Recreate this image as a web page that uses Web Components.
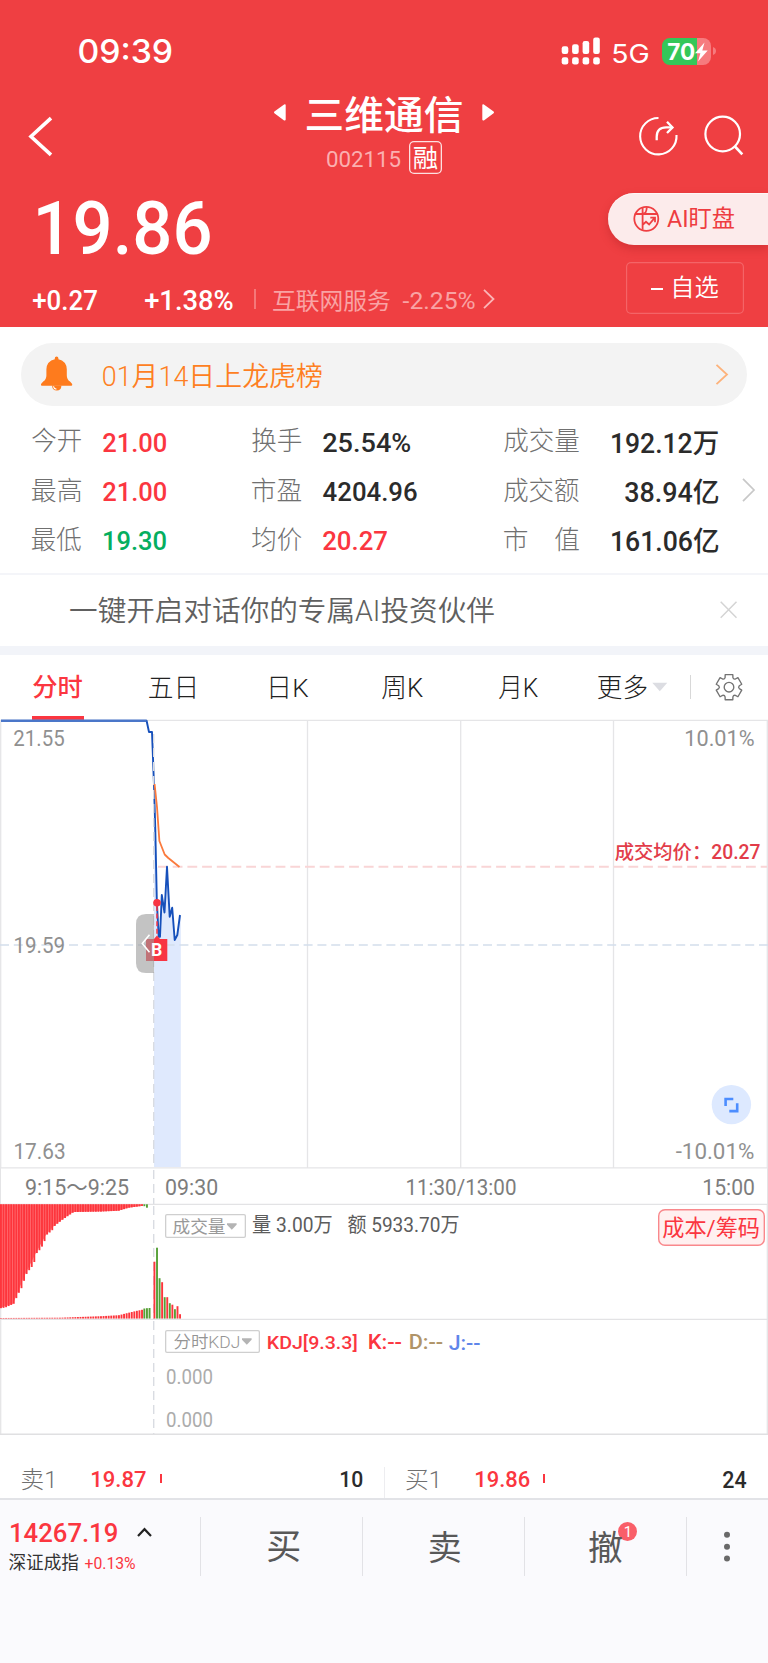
<!DOCTYPE html>
<html lang="zh-CN">
<head>
<meta charset="utf-8">
<title>三维通信 002115</title>
<style>
html,body{margin:0;padding:0;background:#fff}
body{width:768px;height:1663px;overflow:hidden;font-family:Roboto,"Noto Sans CJK SC",sans-serif}
</style>
</head>
<body>
<stock-page></stock-page>
<script>
const FONT = 'Roboto, "Noto Sans CJK SC", sans-serif';
const pen = document.createElement('canvas').getContext('2d');

/* A line of text whose visible glyph box is w by h pixels, with its baseline on a whole pixel. */
class FitText extends HTMLElement {
  connectedCallback() {
    const w = +this.getAttribute('w'), h = +this.getAttribute('h');
    const weight = this.getAttribute('weight') || 400;
    const font = this.getAttribute('font') ? this.getAttribute('font') + ', ' + FONT : FONT;
    /* The glyph box is read at a large size, where rounding does not matter. */
    pen.font = `${weight} 1000px ${font}`;
    const big = pen.measureText(this.textContent);
    const size = 1000 * h / (big.actualBoundingBoxAscent + big.actualBoundingBoxDescent);
    const k = size / 1000;
    const left = big.actualBoundingBoxLeft * k, right = big.actualBoundingBoxRight * k;
    const sx = w / (left + right);
    const line = Math.ceil(size * 1.4 / 2) * 2;
    const root = this.attachShadow({mode: 'open'});
    root.innerHTML = `<style>
      :host{display:block;flex:none;width:${w}px;height:${h}px}
      span{display:block;width:max-content;white-space:pre;font:${weight} ${size}px/${line}px ${font};transform-origin:0 0}
      i{display:inline-block;width:0;height:0}
    </style><span><slot></slot><i></i></span>`;
    const span = root.querySelector('span');
    const now = root.querySelector('i').getBoundingClientRect().bottom;
    const goal = Math.round(this.getBoundingClientRect().top + h - big.actualBoundingBoxDescent * k);
    span.style.transform = `translate(${left * sx}px,${goal - now}px) scaleX(${sx})`;
  }
}
customElements.define('fit-text', FitText);

/* Row builders: each item carries its left, top, width and height; gaps become margins. */
const t = (x, y, w, h, text, color = '', weight = 400, font = '') => ({x, y, w, h,
  html: m => `<fit-text w="${w}" h="${h}" weight="${weight}" font="${font}" style="${m};${color ? 'color:' + color : ''}">${text}</fit-text>`});
const b = (x, y, w, h, css = '', inner = '') => ({x, y, w, h,
  html: m => `<div style="${m};width:${w}px;height:${h}px;${css}">${inner}</div>`});
const g = (x, y, w, h, shapes) => ({x, y, w, h,
  html: m => `<svg style="${m}" width="${w}" height="${h}" viewBox="${x} ${y} ${w} ${h}" fill="none">${shapes}</svg>`});
const row = (y0, h, items, x0 = 0, css = '') => {
  let cur = x0;
  return `<div class="row" style="height:${h}px;${css}">` + items.map(i => {
    const m = `margin:${(i.y - y0).toFixed(2)}px 0 0 ${(i.x - cur).toFixed(2)}px`;
    cur = i.x + i.w;
    return i.html(m);
  }).join('') + '</div>';
};
const BASE = `:host{display:block} .row{display:flex;align-items:flex-start}
  .row>*{flex:none;box-sizing:border-box} svg{display:block;overflow:visible}
  .stack{display:grid} .stack>*{grid-area:1/1}`;
const define = (name, css, markup) => {
  const tpl = document.createElement('template');
  tpl.innerHTML = `<style>${BASE}${css}</style>${markup}`;
  customElements.define(name, class extends HTMLElement {
    constructor() {
      super();
      this.attachShadow({mode: 'open'}).append(tpl.content.cloneNode(true));
    }
  });
};

const RED = '#fb3640', GREEN = '#05ae5f', INK = '#2b2b2b', GREY = '#707070';

/* Status bar */
const bars = [[561.7, 46.3], [572.1, 44.2], [582.6, 41], [593.2, 37.5]].map(([x, y]) =>
  `<rect x="${x}" y="${y}" width="6.6" height="${54 - y}" rx="2.2"/><rect x="${x}" y="57.2" width="6.6" height="7.3" rx="2.2"/>`).join('');
define('status-bar', ':host{color:#fff;height:76px}', row(0, 76, [
  t(79.3, 39, 92.4, 24.7, '09:39', '', 500, 'Inter'),
  g(561, 37, 39, 28, `<g fill="#fff">${bars}</g>`),
  t(613.3, 42.5, 35, 19.8, '5G', '', 400, 'Inter'),
  b(662, 37.7, 49.5, 27, 'border-radius:8px;background:linear-gradient(90deg,#34c759 35px,#f67b7e 35px)',
    row(37.7, 27, [t(668, 42.7, 26.5, 17.3, '70', '', 700, 'Inter'),
      g(695, 42, 13, 20, '<path d="M704.5 42.5 695 53.3h5.4L698 61.5l9.7-11h-5.4z" fill="#fff"/>')], 662)),
  g(713, 47, 3, 8, '<path d="M713 47q3 1.2 3 4t-3 4z" fill="#f67b7e"/>')
]));

/* Title and quote header */
define('stock-header', ':host{color:#fff;height:251px} .split{display:flex} .main{width:600px}',
  row(76, 62, [
    g(30, 116, 24, 42, '<path d="M51 118.2 31 136.5 51 154.8" stroke="#fff" stroke-width="3.6"/>'),
    g(274, 104, 12, 17, '<path d="M275 112.4 284.7 105.2v14.4z" fill="#fff" stroke="#fff" stroke-width="2" stroke-linejoin="round"/>'),
    t(307, 96, 154.5, 36.7, '三维通信', '', 500),
    g(482, 104, 12, 17, '<path d="M493 112.4 483.3 105.2v14.4z" fill="#fff" stroke="#fff" stroke-width="2" stroke-linejoin="round"/>'),
    g(638, 116, 40, 40, '<g stroke="#fff" stroke-width="2.1"><path d="M658.5 118a18.2 18.2 0 1 0 18 17"/><path d="M656.7 140.2v-3.4q0-9.5 9.5-9.5h5.8" stroke-width="2.3"/><path d="m667 121.8 5.5 5.6-5.5 5.6" stroke-width="2.3"/></g>'),
    g(704, 116, 40, 40, '<g stroke="#fff" stroke-width="2.2"><circle cx="722.7" cy="134" r="17.3"/><path d="m735 146.5 7.3 7.8" stroke-width="2.6"/></g>')
  ]) +
  row(138, 42, [
    t(326.8, 150, 73.5, 16.9, '002115', '#fbb0b0'),
    b(409.3, 141.4, 32.4, 32.4, 'border-radius:5px;box-shadow:inset 0 0 0 1.3px #fde0e0', row(141.4, 32, [t(413.7, 146, 23.4, 23.8, '融')], 409.3))
  ]) +
  `<div class="split"><div class="main">` +
  row(180, 90, [t(38, 199.2, 172, 55.8, '19.86', '', 500)]) +
  row(270, 57, [
    t(32.8, 290.2, 63.9, 20.4, '+0.27', '', 500), t(144.8, 290.2, 87.9, 20.4, '+1.38%', '', 500),
    b(254.5, 289, 1.2, 20, 'background:#f57779'),
    t(273.5, 289, 117, 21.8, '互联网服务', '#f9a3a4'), t(403, 291, 72, 18, '-2.25%', '#f9a3a4'),
    g(483, 289, 12, 20, '<path d="m484 289.8 9.5 9.2-9.5 9.2" stroke="#fbb5b6" stroke-width="1.8"/>')
  ]) + `</div><div>` +
  row(180, 82, [b(608.3, 193, 159.7, 51.8, 'background:#fcebeb;border-radius:26px 0 0 26px;box-shadow:0 4px 9px #a91f2360,inset 0 1px 0 #fff9',
    row(193, 51, [
      g(633, 206, 26, 26, '<g stroke="#ef3f42" stroke-width="1.8"><circle cx="646.3" cy="218.8" r="12"/><path d="M642.6 207v22.8M634.8 214h23M643 213.8q3.5-.2 3.8-6.5M643 224.5l3-2.7 3.1 2.7 5.5-6.6M650.3 217.6h4.7v4.7"/></g>'),
      t(667.2, 207.2, 67.2, 22, 'AI盯盘', '#ee3c40')], 608.3))], 600) +
  row(262, 65, [b(626, 262, 118, 51.8, 'border-radius:5px;box-shadow:inset 0 0 0 1.2px #f46467',
    row(262, 50, [b(651.3, 288.4, 11.5, 1.8, 'background:#fff'), t(674, 276.3, 44, 22, '自选', '', 350)], 626))], 600) +
  `</div></div>`);

/* Notice pill */
define('notice-bar', ':host{height:93px}', row(327, 93, [
  b(21, 343, 726, 63, 'border-radius:32px;background:#f3f3f3', row(343, 63, [
    g(41, 356, 32, 35, '<g fill="#fe7b1d"><path d="M54.8 358.3q0-1.8 1.8-1.8t1.8 1.8v1q8.1 1.9 8.4 10v6q0 4.5 3.2 6.2l2 2.2q1 2-1.5 2H42.7q-2.5 0-1.5-2l2-2.2q3.2-1.7 3.2-6.2v-6q.3-8.1 8.4-10z"/><path d="M52 385.5h9.5q-.3 5-4.7 5t-4.8-5z"/></g><path d="M53.4 386.3q.6 2.6 3 2.9" stroke="#fff" stroke-width="1.2"/>'),
    t(103.3, 362.3, 218.7, 26, '01月14日上龙虎榜', '#fe7f22', 350),
    g(715, 363, 14, 22, '<path d="m716.5 364.8 10.5 9.7-10.5 9.7" stroke="#fdb27a" stroke-width="1.8"/>')
  ], 21))]));

/* Key figures */
const figures = [
  ['今开', '21.00', RED, 63.4, '换手', '25.54%', INK, 87.4, '成交量', '192.12万', 611.7, 106],
  ['最高', '21.00', RED, 63.4, '市盈', '4204.96', INK, 93.7, '成交额', '38.94亿', 624.7, 93.3],
  ['最低', '19.30', GREEN, 62.2, '均价', '20.27', RED, 64, '市　值', '161.06亿', 611.7, 106.3]];
define('key-figures', ':host{height:153px}', figures.map((f, i) => {
  const y = 420 + i * 49.3;
  return row(y, 49.3, [
    t(32, y + 8.4, 49, 24, f[0], GREY, 300), t(i == 2 ? 104.4 : 103, y + 12.3, f[3], 20, f[1], f[2], 500),
    t(252.5, y + 8.4, 49.3, 24, f[4], GREY, 300), t(323.4, y + 12.3, f[7], 20, f[5], f[6], 500),
    t(504.3, y + 8.4, 74.7, 24, f[8], GREY, 300), t(f[10], y + (i ? 9.7 : 11.4), f[11], i ? 25.2 : 23.8, f[9], INK, 500)
  ].concat(i == 1 ? [g(742, 478, 14, 24, '<path d="m743 478.8 11 11.2-11 11.2" stroke="#c8c8c8" stroke-width="1.7"/>')] : []));
}).join(''));

/* Assistant strip */
define('ai-strip', ':host{height:72.6px;box-sizing:border-box;border-top:2px solid #f4f5f9} ', row(575, 70, [
  t(70, 597, 424, 27, '一键开启对话你的专属AI投资伙伴', '#606060', 350),
  g(720, 601, 18, 18, '<path d="m720.7 601.7 15.8 16M736.5 601.7l-15.8 16" stroke="#d4d4d4" stroke-width="1.5"/>')
]));

/* Period tabs */
let gear = '';
for (let i = 0; i < 6; i++) {
  const a = i * 60 - 90, p = (r, d) => [729 + r * Math.cos((a + d) * Math.PI / 180), 687.2 + r * Math.sin((a + d) * Math.PI / 180)].map(v => v.toFixed(2)).join(' ');
  gear += `${i ? 'L' : 'M'}${p(13.1, -17)}L${p(13.1, 17)}L${p(10.4, 22)}Q${p(8.9, 30)} ${p(10.4, 38)}`;
}
define('chart-tabs', ':host{height:65px;border-top:9.4px solid #f2f4f9;width:768px}', row(655, 65, [
  b(32.3, 655, 51.4, 65, 'border-bottom:4.4px solid ' + RED, row(655, 60, [t(33.4, 675.7, 49, 23.5, '分时', RED, 500)], 32.3)),
  t(148.7, 677.3, 45.8, 21.7, '五日', '#222', 300), t(271, 677, 37.4, 22, '日K', '#222', 300),
  t(382.3, 676.9, 41, 22.8, '周K', '#222', 300), t(499.2, 676.9, 39.2, 22.6, '月K', '#222', 300),
  t(598, 675.7, 48.8, 24, '更多', '#222', 300),
  g(652, 682, 16, 10, '<path d="M652.3 682.8h15l-7.5 8.4z" fill="#dcdde2"/>'),
  b(690, 675.5, 1.2, 24, 'background:#d8d8d8'),
  g(715, 673, 28, 28, `<g stroke="#737373" stroke-width="1.35" stroke-linejoin="round"><path d="${gear}Z"/><circle cx="729" cy="687.2" r="4.8"/></g>`)
]));

/* Intraday price chart */
const line = '154 785 155.3 830 156.8 900 158.7 936.7 160 936.7 161.8 895 164.5 912.5 167 866.7 169.7 916.7 172.2 907.7 174.7 940 177.3 935 180 915';
define('price-chart', ':host{height:448px}', `<div class="stack">
<svg width="768" height="448" viewBox="0 720 768 448" fill="none">
  <path d="M0 720.4h768M.7 720v448M767.3 720v448M307.5 720v448M460.7 720v448M613.5 720v448M0 1167.8h768" stroke="#e5e5e7" stroke-width="1.3"/>
  <path d="M154 940L${line} 180.8 915V1167H154z" fill="#dfe9fd"/>
  <path d="M0 945h768" stroke="#d3deec" stroke-width="1.7" stroke-dasharray="9 4.8"/>
  <path d="M158 866.7h609" stroke="#f9d5d6" stroke-width="1.9" stroke-dasharray="9.8 4.9"/>
  <path d="M1 720.8H146.6L149 732h3L${line}" stroke="#1650bb" stroke-width="1.9" stroke-linejoin="round"/>
  <path d="M1 720.8H146.6" stroke="#4a76c9" stroke-width="2"/>
  <path d="M153.7 734v434" stroke="#d9dce2" stroke-width="1.4" stroke-dasharray="9 5"/>
  <path d="M154.6 784 157 807l2.4 34 5.3 13.5 3.6 3.5 11.2 9" stroke="#fb7a3d" stroke-width="1.8" stroke-linejoin="round"/>
  <path d="M157 906v30" stroke="#f83543" stroke-width="1.5" stroke-dasharray="5 2.6"/>
  <circle cx="157" cy="902.7" r="3.8" fill="#f83543"/>
  <path d="M147 939h7l3-3.5 3 3.5h7.3v22H146v-22z" fill="#f83543"/>
  <path d="M154 914h-8q-10 0-10 10v39q0 10 10 10h8z" fill="#9b9b9b" fill-opacity=".6"/>
  <path d="m149.5 934.8-7.2 8.6 7.2 8.8" stroke="#fff" stroke-width="1.6"/>
  <circle cx="731.4" cy="1104.6" r="19.7" fill="#dde9ff"/>
  <path d="M725.6 1106v-7h7.7M737.2 1103.3v7.8h-7.9" stroke="#4c8dff" stroke-width="2.6"/>
</svg><div>` +
  row(720, 122, [t(13.8, 730.2, 50, 16.5, '21.55', '#909090'), t(686.2, 730, 68, 16.7, '10.01%', '#909090')]) +
  row(842, 90, [t(615.3, 843, 144.8, 18.4, '成交均价：20.27', '#e23c49', 500)]) +
  row(932, 200, [t(15, 936.8, 48.8, 16.5, '19.59', '#909090'), t(152.4, 943.8, 9.4, 12.6, 'B', '#fff', 700)]) +
  row(1132, 36, [t(14.5, 1143.2, 49.3, 16.5, '17.63', '#909090'), t(676.4, 1143, 77.8, 16.7, '-10.01%', '#909090')]) +
  `</div></div>`);

define('time-axis', ':host{height:36.3px;box-sizing:border-box;background:linear-gradient(#e4e4e6,#e4e4e6) .3px 0/1px 100% no-repeat,linear-gradient(#e4e4e6,#e4e4e6) 767px 0/1px 100% no-repeat}', row(1168, 36, [
  t(26.3, 1179.2, 102.4, 16.3, '9:15～9:25', '#7d7d7d'),
  g(153, 1168, 2, 36, '<path d="M153.7 1170v34" stroke="#d9dce2" stroke-width="1.4" stroke-dasharray="9 5"/>'),
  t(166.5, 1179.2, 51.2, 16.3, '09:30', '#7d7d7d'),
  t(406.6, 1178.9, 108.6, 18, '11:30/13:00', '#7d7d7d'), t(704.2, 1179.2, 50, 16.3, '15:00', '#7d7d7d')
]));

/* Auction and trading volume */
const profile = [[0, 1308.5], [4, 1308], [13, 1304], [16, 1297], [19, 1291], [22, 1286], [24, 1277], [27, 1272], [31, 1267], [34, 1261], [36, 1253], [40, 1249], [43, 1243], [46, 1235], [51, 1231], [54, 1226], [61, 1220.5], [66, 1217], [73, 1212.3], [100, 1212], [118, 1211], [128, 1208], [143, 1206]];
const low = [[0, 1318.3], [60, 1318], [75, 1317.4], [100, 1316.5], [118, 1315.5], [125, 1313.7], [135, 1311.3], [143, 1309.7]];
const at = (pts, x) => {
  for (let i = 1; i < pts.length; i++) if (x <= pts[i][0]) {
    const [a, c] = pts[i - 1], [d, e] = pts[i];
    return c + (e - c) * (x - a) / (d - a);
  }
  return pts[pts.length - 1][1];
};
const bar = (x, y, y2, c) => `<rect x="${x.toFixed(2)}" y="${y}" width="1.9" height="${(y2 - y).toFixed(2)}" fill="${c}"/>`;
const UP = '#fd353c', DN = '#55a036';
let vol = '<path d="M0 1204.6H143V1206L128 1208 118 1211 73 1212.3 66 1217 61 1220.5 54 1226 46 1235 36 1253 24 1277 13 1304 0 1308z" fill="#ff7b7f"/>';
for (let i = 0; i < 56; i++) {
  const x = i * 2.565;
  vol += bar(x, 1204.6, at(profile, x), UP) + bar(x, at(low, x), 1319, UP);
}
vol += bar(143.4, 1204.6, 1206.5, DN) + bar(146, 1204.6, 1208, DN) + bar(143.4, 1308.8, 1319, DN) + bar(146, 1308.5, 1319, DN) + bar(148.6, 1308.3, 1319, DN);
[[1262, 1], [1248, 0], [1278.5, 0], [1282.5, 1], [1297.5, 0], [1297.5, 1], [1303.5, 0], [1305, 1], [1309.5, 0], [1306.5, 1], [1314.5, 1]]
  .forEach(([y, up], i) => vol += bar(153.5 + i * 2.56, y, 1319, up ? UP : DN));
const frame = (y, h) => `<path d="M0 ${y + .4}h768M.7 ${y}v${h}M767.3 ${y}v${h}" stroke="#e3e3e5" stroke-width="1.2"/><path d="M153.7 ${y + 2}v${h - 2}" stroke="#d9dce2" stroke-width="1.4" stroke-dasharray="9 5"/>`;
const chip = (y, w, h, tx) => b(165.2, y, w, h, 'border-radius:2px;box-shadow:inset 0 0 0 1.3px #cfcfcf', row(y, h, tx, 165.2));
const tri = (x, y) => g(x, y, 10, 7, `<path d="M${x} ${y + .3}h9.6v1.5l-4.8 5-4.8-5z" fill="#b4b4b4"/>`);
define('volume-panel', ':host{height:114.9px}', `<div class="stack"><svg width="768" height="115" viewBox="0 1204.3 768 115" fill="none">${frame(1204.3, 115)}${vol}</svg><div>` +
  row(1204.3, 100, [
    chip(1214.6, 80.6, 23.6, [t(173.5, 1218.6, 52, 16.2, '成交量', '#999'), tri(227.2, 1223.7)]),
    t(253.4, 1215.8, 78.8, 18.4, '量 3.00万', '#5c5c5c'), t(348.4, 1215.6, 110.6, 18.8, '额 5933.70万', '#5c5c5c'),
    b(658.4, 1209, 106.2, 37, 'border-radius:7px;background:#fff0f0;box-shadow:inset 0 0 0 1.4px #f9888c', row(1209, 36, [t(663.5, 1217, 96, 21.2, '成本/筹码', '#fb3640')], 658.4))
  ]) + `</div></div>`);

/* KDJ indicator */
define('kdj-panel', ':host{height:115.8px}', `<div class="stack"><svg width="768" height="115.8" viewBox="0 1319.2 768 115.8" fill="none">${frame(1319.2, 115)}<path d="M0 1434.4h768" stroke="#e0e0e2" stroke-width="1.4"/></svg><div>` +
  row(1319.2, 44, [
    chip(1330.3, 94.6, 22.8, [t(173.8, 1333.6, 65, 16.2, '分时KDJ', '#949494', 350), tri(241.8, 1338.7)]),
    t(267.8, 1335, 88.8, 17.8, 'KDJ[9.3.3]', RED, 500), t(369.3, 1335.6, 32.4, 14.5, 'K:--', RED, 500),
    t(409.6, 1335.6, 32.6, 14.5, 'D:--', '#b09468', 500), t(449, 1335.6, 31, 14.7, 'J:--', '#5f86ea', 500)
  ]) + row(1363.2, 43, [t(166.6, 1369.8, 45.2, 14.6, '0.000', '#acacac')]) + row(1406.2, 28, [t(166.6, 1413, 45.2, 14.6, '0.000', '#acacac')]) + `</div></div>`);

/* Best ask and bid */
define('order-book', ':host{height:63px}', row(1435, 63, [
  t(22.3, 1468.7, 30.3, 21.5, '卖1', GREY, 300), t(92, 1471, 53.7, 17.2, '19.87', RED, 500), b(159.6, 1474.7, 2, 8.6, 'background:' + RED),
  t(340.6, 1471, 21.6, 17.2, '10', INK, 500), b(384, 1467, 1.2, 31, 'background:#ededf0'),
  t(405.7, 1469.3, 30.8, 20.7, '买1', GREY, 300), t(476, 1471, 53.4, 17.2, '19.86', RED, 500), b(543.5, 1474.7, 2, 8.6, 'background:' + RED),
  t(722.8, 1471, 23.2, 17.2, '24', INK, 500)
]));

/* Trade bar */
const sep = x => b(x, 1517, 1.2, 59, 'background:#e2e2e6');
define('trade-bar', ':host{height:165px;box-sizing:border-box;border-top:2px solid #e2e3e7;background:#fafafd} .wrap{display:flex}',
  `<div class="wrap"><div style="width:190px">` +
  row(1500, 46, [t(10.7, 1523.3, 106, 20, '14267.19', RED, 500), g(137, 1527, 15, 11, '<path d="m138 1536 6.5-6.8 6.5 6.8" stroke="#222" stroke-width="2.2"/>')]) +
  row(1546, 40, [t(8.8, 1554.4, 69.4, 16.8, '深证成指', '#333'), t(85, 1556.6, 50.2, 13, '+0.13%', RED)]) +
  `</div>` +
  row(1500, 80, [
    sep(200), t(267.8, 1532.5, 31.2, 30.7, '买', '#585858'), sep(362), t(429.8, 1530.7, 30.3, 32.5, '卖', '#585858'), sep(524.2),
    t(589.1, 1530.3, 32.7, 32.9, '撤', '#585858'),
    b(617.7, 1522.2, 19.6, 19.6, 'border-radius:50%;background:#f95f69', row(1522.2, 19, [t(625, 1526.8, 4.2, 10.8, '1', '#fff')], 617.7)),
    sep(685.8),
    g(723, 1530, 8, 34, '<g fill="#696969"><circle cx="727" cy="1534.8" r="3"/><circle cx="727" cy="1546.7" r="3"/><circle cx="727" cy="1558.5" r="3"/></g>')
  ], 190) + `</div>`);

define('stock-page', ':host{width:768px;height:1663px;overflow:hidden;background:#fff} header{background:#ef3f42;height:327px}',
  `<header><status-bar></status-bar><stock-header></stock-header></header>
   <notice-bar></notice-bar><key-figures></key-figures><ai-strip></ai-strip><chart-tabs></chart-tabs>
   <price-chart></price-chart><time-axis></time-axis><volume-panel></volume-panel><kdj-panel></kdj-panel>
   <order-book></order-book><trade-bar></trade-bar>`);
</script>
</body>
</html>
